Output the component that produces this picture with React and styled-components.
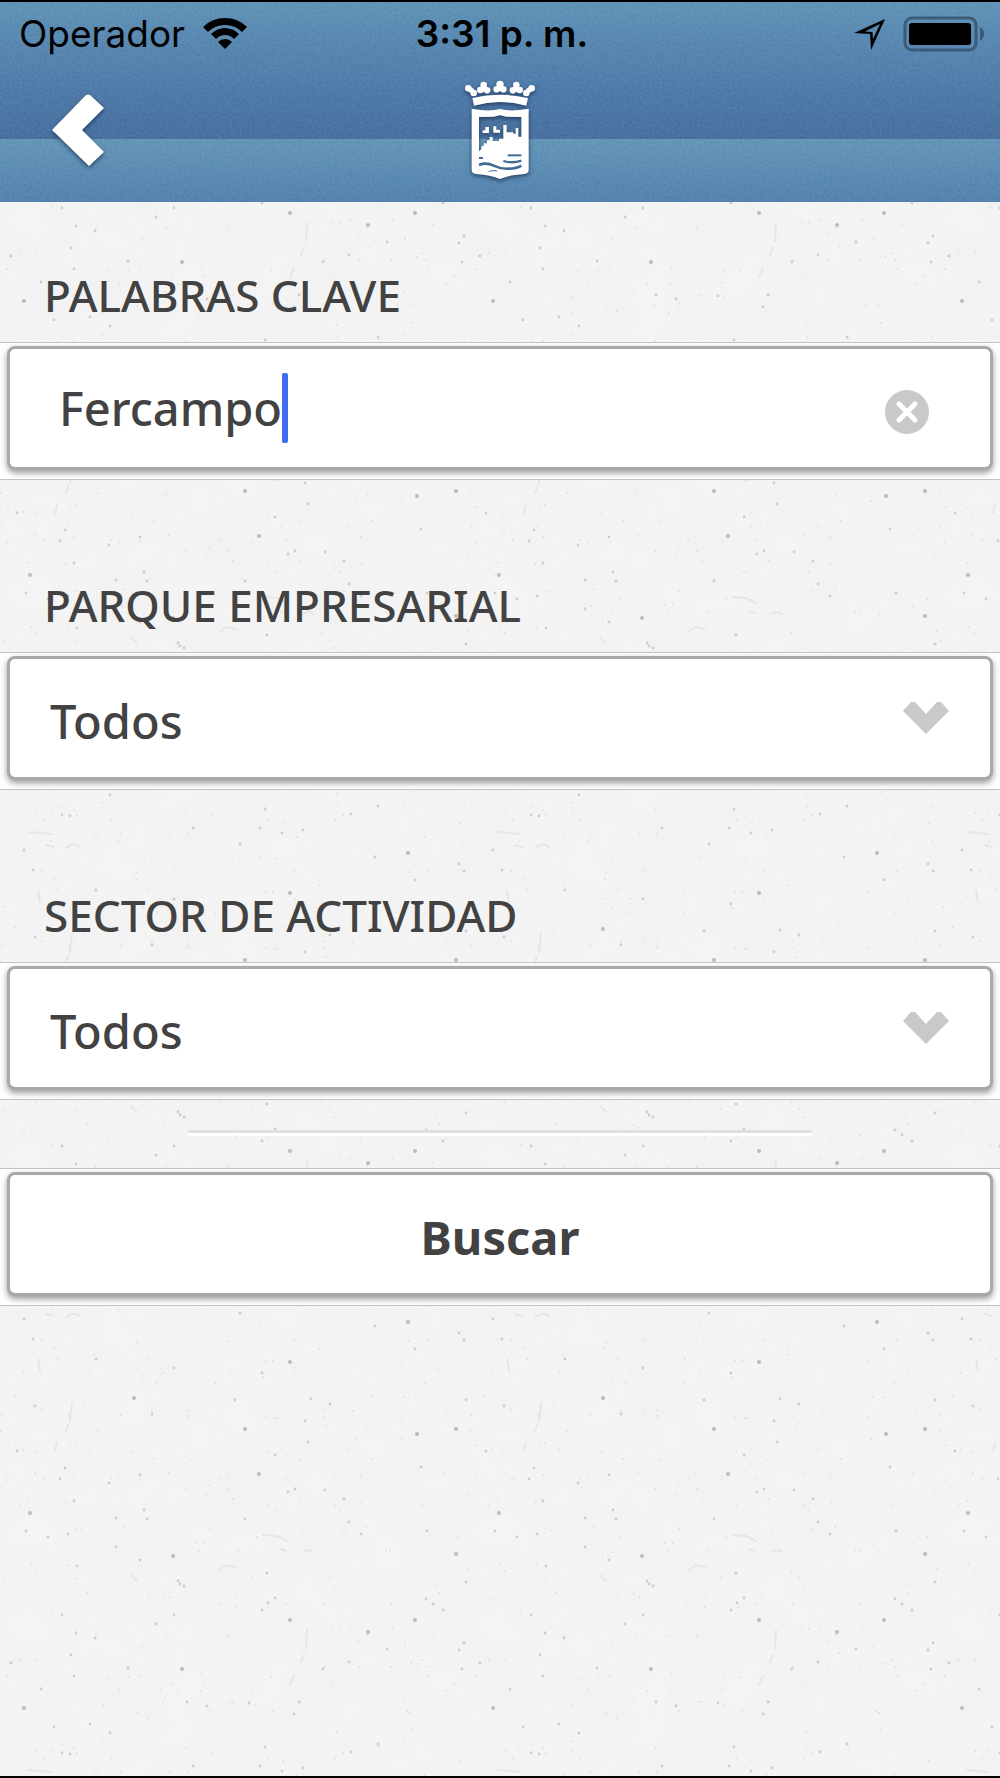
import { useState } from 'react';
import styled, { createGlobalStyle } from 'styled-components';

const theme = {
  colors: {
    text: '#424242',
    muted: '#c9c9c9',
    border: '#a9a9a9',
    line: '#c4c4c6',
    caret: '#426bf2',
    paper: '#f4f4f4',
  },
  fonts: {
    body: '"Noto Sans", "Open Sans", sans-serif',
    status: 'Inter, "Liberation Sans", sans-serif',
  },
};

const GlobalStyle = createGlobalStyle`
  *, *::before, *::after {
    box-sizing: border-box;
  }

  body {
    margin: 0;
    background: ${theme.colors.paper};
    color: ${theme.colors.text};
    font-family: ${theme.fonts.body};
  }
`;

const Page = styled.div`
  position: relative;
  isolation: isolate;
  min-height: 100vh;
  border-top: 2px solid #000;
  border-bottom: 2px solid #000;
`;

const Texture = styled.svg`
  position: absolute;
  inset: 0;
  width: 100%;
  height: 100%;
  z-index: -1;
`;

const Header = styled.header`
  position: relative;
  isolation: isolate;
  background:
    linear-gradient(#6092b5, #4d7eab) bottom / 100% 63px no-repeat,
    linear-gradient(#5c90b5, #5384ae 30%, #4876a6 66%, #446c9c) top / 100% 137px no-repeat;
`;

const StatusBar = styled.div`
  display: grid;
  grid-template-columns: 1fr auto 1fr;
  align-items: center;
  height: 64px;
  padding: 0 15px 0 19px;
  color: #000;
  font-family: ${theme.fonts.status};
  font-size: 37px;
  line-height: 44px;
`;

const StatusGroup = styled.div`
  display: flex;
  align-items: center;
  justify-content: ${({ $end }) => ($end ? 'flex-end' : 'flex-start')};
  gap: 18px;
`;

const Clock = styled.time`
  font-weight: 600;
`;

const NavBar = styled.nav`
  display: grid;
  grid-template-columns: 1fr auto 1fr;
  align-items: center;
  height: 136px;
  padding: 0 48px 8px;

  svg {
    display: block;
    overflow: visible;
    filter: drop-shadow(0 2px 2px rgba(20, 38, 70, 0.7));
  }
`;

const BackButton = styled.button`
  justify-self: start;
  padding: 4px;
  border: 0;
  background: none;
  cursor: pointer;
`;

const Label = styled.label`
  display: flex;
  align-items: flex-end;
  height: ${({ $first }) => ($first ? '140px' : '172px')};
  padding: 0 44px 17px;
  font-size: 44px;
  font-weight: 500;
  line-height: 60px;
  text-transform: uppercase;
`;

const Row = styled.div`
  padding: 3px 7px 9px;
  background: #fff;
  border-top: 1px solid ${theme.colors.line};
  border-bottom: 1px solid ${theme.colors.line};
`;

const Box = styled.div`
  position: relative;
  display: flex;
  align-items: center;
  height: 124px;
  background: #fff;
  border: 3px solid ${theme.colors.border};
  border-radius: 8px;
  box-shadow: 0 3px 6px rgba(0, 0, 0, 0.4);
`;

const TextField = styled(Box)`
  padding: 0 61px 0 49px;
`;

const TextInput = styled.input`
  field-sizing: content;
  min-width: 4px;
  max-width: 80%;
  height: 70px;
  padding: 0;
  border: 0;
  outline: 0;
  background: none;
  color: inherit;
  font: 500 47px/64px ${theme.fonts.body};
  caret-color: transparent;
`;

const Caret = styled.span`
  width: 6px;
  height: 70px;
  border-radius: 2px;
  background: ${theme.colors.caret};
`;

const ClearButton = styled.button`
  margin-left: auto;
  padding: 8px 0 0;
  border: 0;
  background: none;
  cursor: pointer;

  svg {
    display: block;
  }
`;

const Select = styled.select`
  appearance: none;
  width: 100%;
  height: 100%;
  padding: 6px 120px 0 40px;
  border: 0;
  border-radius: 5px;
  outline: 0;
  background: none;
  color: inherit;
  font: 500 47px/64px ${theme.fonts.body};
`;

const Chevron = styled.svg`
  position: absolute;
  right: 41px;
  pointer-events: none;
`;

const Divider = styled.hr`
  width: 624px;
  max-width: 63%;
  height: 6px;
  margin: 30px auto 32px;
  border: 0;
  border-top: 3px solid #e0e0e0;
  background: #fff;
`;

const SubmitButton = styled(Box).attrs({ as: 'button', type: 'submit' })`
  justify-content: center;
  width: 100%;
  padding: 6px 0 0;
  color: inherit;
  font: 700 47px/64px ${theme.fonts.body};
  cursor: pointer;
`;

// Specks of the recycled paper tile: x, y, size (1 light, 2 dark)
const specks = [
  [24, 14, 1], [240, 8, 1], [408, 17, 2], [375, 21, 1], [459, 28, 1], [464, 35, 1], [33, 34, 1],
  [96, 54, 1], [174, 63, 1], [290, 57, 2], [262, 68, 1], [415, 44, 1], [134, 93, 2], [152, 109, 1],
  [35, 101, 1], [235, 95, 1], [330, 99, 1], [311, 94, 1], [305, 116, 1], [245, 124, 2], [456, 124, 2],
  [417, 129, 2], [308, 137, 1], [275, 150, 1], [466, 95, 1], [17, 146, 1], [65, 163, 1], [60, 174, 1],
  [259, 169, 2], [421, 162, 1], [109, 178, 1], [74, 196, 1], [30, 208, 2], [140, 170, 1], [288, 187, 1],
  [295, 184, 1], [325, 185, 1], [344, 194, 1], [144, 205, 1], [116, 213, 1], [147, 214, 1], [245, 214, 1],
  [349, 217, 1], [361, 229, 1], [26, 226, 1], [48, 232, 1], [68, 229, 1], [116, 242, 1], [173, 251, 2],
  [140, 255, 1], [456, 249, 2], [427, 226, 1], [77, 261, 1], [267, 268, 1], [178, 276, 1], [180, 279, 1],
  [184, 281, 1], [466, 277, 1], [275, 293, 1], [268, 298, 1], [262, 305, 1], [426, 294, 1], [433, 299, 1],
  [443, 305, 1], [62, 310, 1], [174, 310, 1], [290, 315, 2], [415, 315, 2], [156, 319, 1], [76, 328, 1],
  [95, 333, 1], [368, 327, 2], [464, 338, 1], [459, 345, 1], [387, 344, 1], [71, 350, 1], [11, 358, 1],
  [182, 364, 2], [349, 357, 1], [323, 364, 1], [462, 364, 1], [128, 363, 1], [74, 371, 1], [41, 384, 1],
  [187, 397, 1], [249, 398, 1], [24, 403, 2], [207, 401, 1], [294, 409, 1], [299, 397, 1], [54, 422, 1],
  [90, 419, 1], [110, 428, 1], [265, 442, 1], [62, 448, 1], [70, 449, 1], [193, 461, 1], [260, 461, 1],
  [303, 463, 1], [351, 447, 1], [378, 439, 1], [282, 466, 1],
];

// Fine dust between the specks
const dust = Array.from({ length: 260 }, (_, i) => [
  (i * 181 + i * i * 7) % 469,
  (i * 97 + i * i * 13) % 469,
]);

const PaperTexture = () => (
  <Texture aria-hidden="true">
    <defs>
      <filter id="fibres" x="0" y="0" width="100%" height="100%">
        <feTurbulence type="fractalNoise" baseFrequency="0.02" numOctaves="4" seed="4" stitchTiles="stitch" />
        <feColorMatrix values="0 0 0 0 0.8  0 0 0 0 0.8  0 0 0 0 0.8  0.3 0 0 0 -0.08" />
      </filter>
      <pattern id="paper" y="-104" width="469" height="469" patternUnits="userSpaceOnUse">
        <rect width="469" height="469" filter="url(#fibres)" />
        {dust.map(([x, y], i) => (
          <circle key={i} cx={x} cy={y} r="1" fill="#bdbdbd" opacity="0.35" />
        ))}
        {specks.map(([x, y, size], i) => (
          <circle
            key={i}
            cx={x}
            cy={y}
            r={size === 2 ? 2 : 1.4}
            fill={size === 2 ? '#b2b2b2' : '#c6c6c6'}
            opacity="0.85"
          />
        ))}
        <g fill="none" stroke="#e6e6e6" strokeWidth="2" strokeLinecap="round">
          <path d="M66 12q8-6 14-1M46 9l8 2M38 54l2 12" />
          <path d="M72 98l-2 18M68 120l-2 6M57 138l-2 8" />
          <path d="M263 230l14 1 10 5M303 247q7-4 10 0M280 244l6 2" />
          <path d="M307 325l-1 18M304 350l-3 7M293 372l-3 8" />
          <path d="M219 265l8-5 9 2M131 270l6 6M29 465l22 2" />
        </g>
      </pattern>
    </defs>
    <rect width="100%" height="100%" fill={theme.colors.paper} />
    <rect width="100%" height="100%" fill="url(#paper)" />
  </Texture>
);

const HeaderGrain = () => (
  <Texture aria-hidden="true">
    <filter id="grain" x="0" y="0" width="100%" height="100%">
      <feTurbulence type="fractalNoise" baseFrequency="0.4" numOctaves="2" seed="8" />
      <feColorMatrix values="0 0 0 0 1  0 0 0 0 1  0 0 0 0 1  0.4 0 0 0 -0.1" />
    </filter>
    <rect width="100%" height="100%" filter="url(#grain)" opacity="0.35" />
  </Texture>
);

const WifiIcon = () => (
  <svg width="44" height="32" viewBox="0 0 44 32" role="img" aria-label="Wi-Fi">
    <path d="M0 9Q9 0 22 0t22 9l-5 5Q32 7 22 7T5 14Z" />
    <path d="M8 16q6-6 14-6t14 6l-5 5q-4-4-9-4t-9 4Z" />
    <path d="M15 24q3-3 7-3t7 3l-7 7Z" />
  </svg>
);

const LocationIcon = () => (
  <svg width="32" height="32" viewBox="0 0 32 32" role="img" aria-label="Ubicación">
    <path
      fillRule="evenodd"
      d="M1 15 32 1 18 32 17 16ZM12 13.500 19.500 14 20 21 27 6Z"
    />
  </svg>
);

const BatteryIcon = () => (
  <svg width="82" height="36" viewBox="0 0 82 36" role="img" aria-label="Batería">
    <rect x="2" y="2" width="71" height="32" rx="7" fill="none" stroke="#3b5b77" strokeWidth="3" />
    <rect x="6" y="7" width="62" height="22" rx="3" />
    <path d="M77 11q4 2 4 7t-4 7Z" fill="#3b5b77" />
  </svg>
);

// Half of the crown; it is mirrored around the middle of the shield
const CrownSide = () => (
  <>
    <circle cx="82" cy="52" r="10" />
    <circle cx="91" cy="58" r="8" />
    <circle cx="98" cy="66" r="10" />
    <circle cx="128" cy="42" r="10" />
    <circle cx="118" cy="57" r="10" />
    <circle cx="130" cy="54" r="9" />
    <circle cx="138" cy="58" r="10" />
    <circle cx="167" cy="55" r="10" />
  </>
);

const Crest = () => (
  <svg width="72" height="102" viewBox="69 24 216 306" role="img" aria-label="Ayuntamiento de Málaga" fill="#fff">
    <CrownSide />
    <g transform="translate(354 0) scale(-1 1)">
      <CrownSide />
    </g>
    <circle cx="177" cy="40" r="11" />
    <circle cx="177" cy="52" r="9" />
    <path d="M94 81Q177 61 261 81L256 104Q177 82 99 104Z" />
    <path
      fillRule="evenodd"
      d="M92 113Q145 123 177 114Q210 123 263 113V296Q263 307 250 309Q205 312 177 324Q150 312 105 309Q92 307 92 296Z
         M114 138V241L121 234V225H128V217H138V208H146V198H155V210H174V203H187V162H197V184H217V188H224V171H232V197H241V138L196 137 177 133 158 137Z"
    />
    <path d="M125 178h8v-10h11v18h-19ZM157 166h9v10h11v9h-20Z" />
    <g fill="none" stroke="#426b94" strokeWidth="6">
      <path d="M114 261l12 0" />
      <path d="M200 253h41" />
      <path d="M187 270q28 8 54-1" strokeWidth="7" />
      <path d="M114 282q22-9 44 2t46 9q22 0 37-9" strokeWidth="8" />
      <path d="M143 301q12-4 25-1" strokeWidth="3" />
    </g>
  </svg>
);

const SelectRow = ({ id, options }) => (
  <Row>
    <Box>
      <Select id={id}>
        {options.map((option) => (
          <option key={option}>{option}</option>
        ))}
      </Select>
      <Chevron width="46" height="32" viewBox="0 0 46 32" aria-hidden="true">
        <path d="M0 9 8 0H12L23 12 34 0H38L46 9 23 32Z" fill={theme.colors.muted} />
      </Chevron>
    </Box>
  </Row>
);

export default function App() {
  const [keywords, setKeywords] = useState('Fercampo');

  return (
    <Page>
      <GlobalStyle />
      <PaperTexture />
      <Header>
        <HeaderGrain />
        <StatusBar>
          <StatusGroup>
            <span>Operador</span>
            <WifiIcon />
          </StatusGroup>
          <Clock>3:31 p. m.</Clock>
          <StatusGroup $end>
            <LocationIcon />
            <BatteryIcon />
          </StatusGroup>
        </StatusBar>
        <NavBar>
          <BackButton type="button" aria-label="Volver">
            <svg width="52" height="72" viewBox="0 0 52 72">
              <path d="M0 36 34 1q2-1 4 0L52 14 30 36 52 58 37 72Z" fill="#fff" />
            </svg>
          </BackButton>
          <Crest />
        </NavBar>
      </Header>
      <form onSubmit={(e) => e.preventDefault()}>
        <Label htmlFor="keywords" $first>Palabras clave</Label>
        <Row>
          <TextField>
            <TextInput
              id="keywords"
              type="text"
              value={keywords}
              onChange={(e) => setKeywords(e.target.value)}
            />
            <Caret />
            <ClearButton type="button" aria-label="Borrar" onClick={() => setKeywords('')}>
              <svg width="44" height="44" viewBox="0 0 44 44">
                <circle cx="22" cy="22" r="22" fill={theme.colors.muted} />
                <path d="M14 14 30 30M30 14 14 30" stroke="#fff" strokeWidth="5" strokeLinecap="round" />
              </svg>
            </ClearButton>
          </TextField>
        </Row>
        <Label htmlFor="park">Parque empresarial</Label>
        <SelectRow id="park" options={['Todos']} />
        <Label htmlFor="sector">Sector de actividad</Label>
        <SelectRow id="sector" options={['Todos']} />
        <Divider />
        <Row>
          <SubmitButton>Buscar</SubmitButton>
        </Row>
      </form>
    </Page>
  );
}
